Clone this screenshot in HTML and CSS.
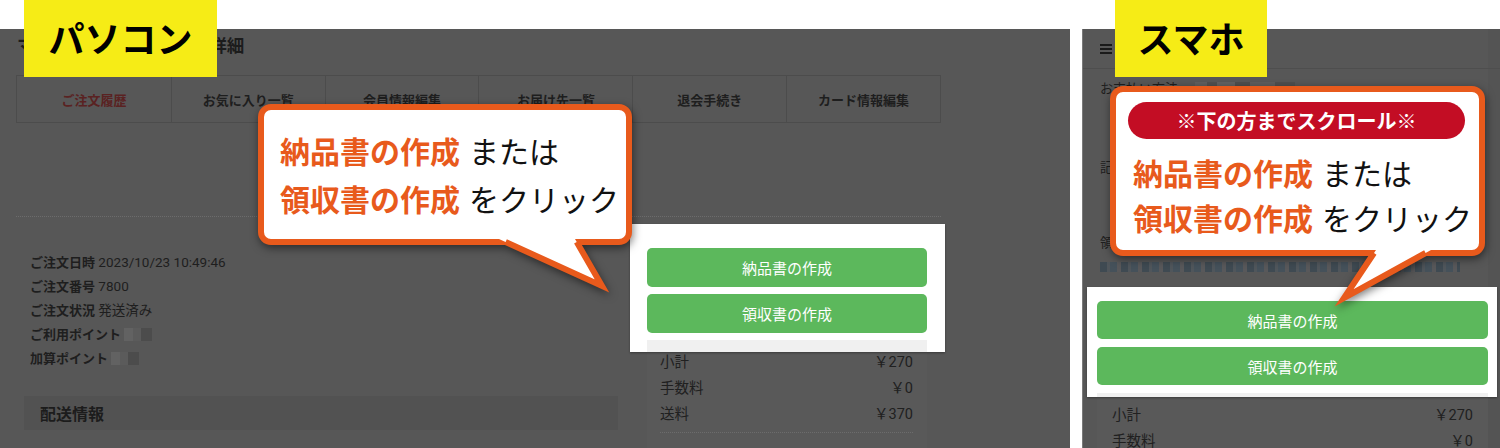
FILE: index.html
```html
<!DOCTYPE html>
<html lang="ja">
<head>
<meta charset="utf-8">
<title>納品書・領収書の作成</title>
<link rel="stylesheet" href="styles.css">
</head>
<body>
<div class="page">
  <section class="panel pc">
    <div class="pc-title">マイページ｜ご注文履歴詳細</div>
    <nav class="tabs">
      <div class="tab active">ご注文履歴</div>
      <div class="tab">お気に入り一覧</div>
      <div class="tab">会員情報編集</div>
      <div class="tab">お届け先一覧</div>
      <div class="tab">退会手続き</div>
      <div class="tab">カード情報編集</div>
    </nav>
    <div class="dotted"></div>
    <div class="pc-body">
      <div class="pc-left">
        <div class="order-info">
          <div class="info-row"><b>ご注文日時</b> 2023/10/23 10:49:46</div>
          <div class="info-row"><b>ご注文番号</b> 7800</div>
          <div class="info-row"><b>ご注文状況</b> 発送済み</div>
          <div class="info-row"><b>ご利用ポイント</b> <span class="mosaic"></span></div>
          <div class="info-row"><b>加算ポイント</b> <span class="mosaic"></span></div>
        </div>
        <h3 class="section-head">配送情報</h3>
      </div>
      <div class="pc-right">
        <div class="spot">
          <button class="btn">納品書の作成</button>
          <button class="btn btn-2">領収書の作成</button>
          <div class="strip"></div>
        </div>
        <div class="summary">
          <div class="sum-row"><span>小計</span><span>￥270</span></div>
          <div class="sum-row"><span>手数料</span><span>￥0</span></div>
          <div class="sum-row"><span>送料</span><span>￥370</span></div>
          <div class="sum-line"></div>
          <div class="sum-total">￥640</div>
        </div>
      </div>
    </div>
  </section>

  <section class="panel sp">
    <header class="sp-header">
      <svg class="burger" width="12" height="10" viewBox="0 0 12 10"><rect x="0" y="0" width="12" height="2"/><rect x="0" y="4" width="12" height="2"/><rect x="0" y="8" width="12" height="2"/></svg>
    </header>
    <div class="sp-body">
      <div class="sp-row sp-pay">お支払い方法 <span class="mosaic mosaic-wide"></span></div>
      <div class="sp-row sp-note">記載事項</div>
      <div class="sp-row sp-rec">領収書宛名</div>
      <div class="sp-band"></div>
    </div>
    <div class="sp-spot">
      <button class="btn btn-sp">納品書の作成</button>
      <button class="btn btn-sp btn-sp-2">領収書の作成</button>
      <div class="strip strip-sp"></div>
    </div>
    <div class="sp-summary">
      <div class="sum-row"><span>小計</span><span>￥270</span></div>
      <div class="sum-row"><span>手数料</span><span>￥0</span></div>
      <div class="sum-row"><span>送料</span><span>￥370</span></div>
    </div>
  </section>

  <div class="label label-pc">パソコン</div>
  <div class="label label-sp">スマホ</div>

  <div class="callout callout-pc">
    <div class="callout-box">
      <div class="callout-line"><span class="em">納品書の作成</span><span class="plain">または</span></div>
      <div class="callout-line"><span class="em">領収書の作成</span><span class="plain">をクリック</span></div>
    </div>
    <svg class="tail tail-pc" width="140" height="75" viewBox="0 0 140 75">
      <path d="M19 9 L122 56 L95 9 Z" fill="#fff"/>
      <path d="M25.6 12 L122 56 L96.7 12" fill="none" stroke="#e85a1c" stroke-width="6" stroke-linejoin="miter" stroke-miterlimit="10"/>
    </svg>
  </div>

  <div class="callout callout-sp">
    <div class="callout-box">
      <div class="pill">※下の方までスクロール※</div>
      <div class="sp-lines">
        <div class="callout-line sp-line"><span class="em">納品書の作成</span><span class="plain">または</span></div>
        <div class="callout-line sp-line"><span class="em">領収書の作成</span><span class="plain">をクリック</span></div>
      </div>
    </div>
    <svg class="tail tail-sp" width="130" height="75" viewBox="0 0 130 75">
      <path d="M56 10 L24 58 L111 10 Z" fill="#fff"/>
      <path d="M54 13 L24 58 L105.6 13" fill="none" stroke="#e85a1c" stroke-width="6" stroke-linejoin="miter" stroke-miterlimit="10"/>
    </svg>
  </div>
</div>
</body>
</html>
```

FILE: styles.css
```css
* { box-sizing: border-box; }

body {
  margin: 0;
  background: #ffffff;
  font-family: "Noto Sans CJK JP", "Noto Sans", sans-serif;
}

.page {
  position: relative;
  width: 1500px;
  height: 448px;
  overflow: hidden;
  display: flex;
  align-items: stretch;
  padding-top: 29px;
}

.panel {
  background: #575757;
  color: #1e1e1e;
}

/* ---------- PC panel ---------- */
.pc {
  width: 1070px;
  flex: none;
  padding-left: 16px;
}

.pc-title {
  padding: 5px 0 0 1px;
  line-height: 22px;
  font-size: 17.5px;
  font-weight: 700;
  color: #1c1c1c;
  margin-bottom: 19px;
  white-space: nowrap;
}

.tabs {
  display: grid;
  grid-template-columns: repeat(6, 1fr);
  width: 925px;
  height: 48px;
  border: 1px solid #4c4c4c;
}

.tab {
  display: flex;
  align-items: center;
  justify-content: center;
  font-size: 13px;
  font-weight: 700;
  color: #1e1e1e;
  border-left: 1px solid #4c4c4c;
}

.tab:first-child { border-left: 0; }
.tab.active { color: #5a2222; }

.dotted {
  margin-top: 93px;
  width: 925px;
  border-top: 1px dotted #6c6c6c;
}

.pc-body {
  display: flex;
  gap: 12px;
  padding-left: 8px;
}

.pc-left { width: 594px; }

.order-info {
  margin-top: 33px;
  padding-left: 6px;
}

.info-row {
  font-family: "Roboto", "Noto Sans CJK JP", sans-serif;
  font-size: 13.5px;
  line-height: 23px;
  color: #1e1e1e;
  white-space: nowrap;
}

.info-row b {
  font-family: "Noto Sans CJK JP", sans-serif;
  font-size: 13px;
  font-weight: 700;
}

.mosaic {
  display: inline-block;
  width: 28px;
  height: 13px;
  vertical-align: -2px;
  background: linear-gradient(90deg, #626262 0 9px, #5b5b5b 9px 17px, #4c4c4c 17px 28px);
}

.section-head {
  margin: 26px 0 0;
  height: 34px;
  line-height: 34px;
  padding-left: 16px;
  background: #525252;
  font-size: 16px;
  font-weight: 700;
  color: #1c1c1c;
}

.pc-right {
  width: 315px;
  margin-top: 7px;
}

.spot {
  background: #ffffff;
  padding: 24px 18px 0 17px;
  box-shadow: 0 1px 2px rgba(0, 0, 0, 0.35);
  position: relative;
}

.btn {
  display: block;
  width: 100%;
  height: 39px;
  border: 0;
  border-radius: 5px;
  background: #5cb85c;
  color: #ffffff;
  font-family: "Noto Sans CJK JP", "Noto Sans", sans-serif;
  font-size: 15px;
  padding: 0;
}

.btn-2 { margin-top: 7px; }

.strip {
  margin-top: 7px;
  height: 12px;
  background: #f0f0f0;
}

.summary {
  margin: 0 18px 0 17px;
  background: #595959;
  padding: 0 14px 0 13px;
  height: 120px;
}

.sum-row {
  display: flex;
  justify-content: space-between;
  height: 26px;
  line-height: 22px;
  font-family: "Roboto", "Noto Sans CJK JP", sans-serif;
  font-size: 14.5px;
  color: #202020;
}

.sum-line {
  margin-top: 2px;
  border-top: 1px dotted #6c6c6c;
}

.sum-total {
  margin-top: 13px;
  text-align: right;
  padding-right: 30px;
  font-family: "Roboto", "Noto Sans CJK JP", sans-serif;
  font-size: 26px;
  line-height: 30px;
  font-weight: 700;
  color: #1c1c1c;
}

/* ---------- Smartphone panel ---------- */
.sp {
  flex: 1;
  margin-left: 12px;
  border-left: 1px solid #7a7a7a;
  box-shadow: inset -12px 0 0 #545454;
}

.sp-header {
  height: 40px;
  border-bottom: 1px solid #4e4e4e;
  padding-left: 17px;
  display: flex;
  align-items: center;
}

.burger { fill: #1a1a1a; display: block; }

.sp-body { padding-left: 17px; }

.sp-row {
  font-size: 13px;
  line-height: 20px;
  color: #1e1e1e;
  white-space: nowrap;
}

.sp-pay { margin-top: 9px; }
.mosaic-wide { width: 100px; margin-left: 14px; background: linear-gradient(90deg, #5f5f5f 0 12px, #505050 12px 22px, #626262 22px 40px, #4e4e4e 40px 55px, #5d5d5d 55px 80px, #4f4f4f 80px 100px); }
.sp-note { margin-top: 59px; }
.sp-rec { margin-top: 55px; }

.sp-band {
  margin-top: 10px;
  width: 360px;
  height: 10px;
  background: repeating-linear-gradient(90deg, #3f4a52 0 7px, #50565b 7px 10px, #45515a 10px 17px, #58585a 17px 21px);
}

.sp-spot {
  margin: 15px 0 0 4px;
  width: 410px;
  background: #ffffff;
  padding: 14px 9px 0 10px;
  position: relative;
  box-shadow: 0 1px 2px rgba(0, 0, 0, 0.35);
}

.btn-sp { height: 38px; }
.btn-sp-2 { margin-top: 8px; }
.strip-sp { margin-top: 8px; height: 4px; }

.sp-summary {
  margin-left: 14px;
  width: 391px;
  height: 80px;
  background: #595959;
  padding: 8px 15px 0 15px;
}

/* ---------- Labels ---------- */
.label {
  position: absolute;
  top: 0;
  height: 77px;
  background: #f6ec16;
  display: flex;
  align-items: center;
  justify-content: center;
  font-size: 36px;
  font-weight: 700;
  color: #000000;
  padding-bottom: 3px;
}

.label-pc { left: 24px; width: 193px; }
.label-sp { left: 1115px; width: 152px; }

/* ---------- Callouts ---------- */
.callout {
  position: absolute;
  filter: drop-shadow(1px 3px 4px rgba(0, 0, 0, 0.5));
}

.callout-box {
  border: 6px solid #e85a1c;
  border-radius: 13px;
  background: #ffffff;
}

.callout-pc { left: 258px; top: 104px; }
.callout-pc .callout-box {
  width: 374px;
  height: 141px;
  padding: 16px 0 0 16px;
}

.callout-line {
  font-size: 30px;
  line-height: 48px;
  white-space: nowrap;
}

.em { color: #e85a1c; font-weight: 700; }
.plain { color: #111111; font-weight: 400; margin-left: 9px; }

.tail { position: absolute; overflow: visible; }
.tail-pc { left: 222px; top: 126px; }

.callout-sp { left: 1110px; top: 86px; }
.callout-sp .callout-box {
  width: 375px;
  height: 170px;
}

.pill {
  margin: 10px 14px 0 12px;
  height: 37px;
  border-radius: 19px;
  background: #c30d24;
  color: #ffffff;
  font-size: 20px;
  font-weight: 700;
  line-height: 37px;
  text-align: center;
}

.sp-lines {
  margin-top: 11px;
  padding-left: 17px;
}

.sp-line { line-height: 45px; }

.tail-sp { left: 210px; top: 154px; }
```
